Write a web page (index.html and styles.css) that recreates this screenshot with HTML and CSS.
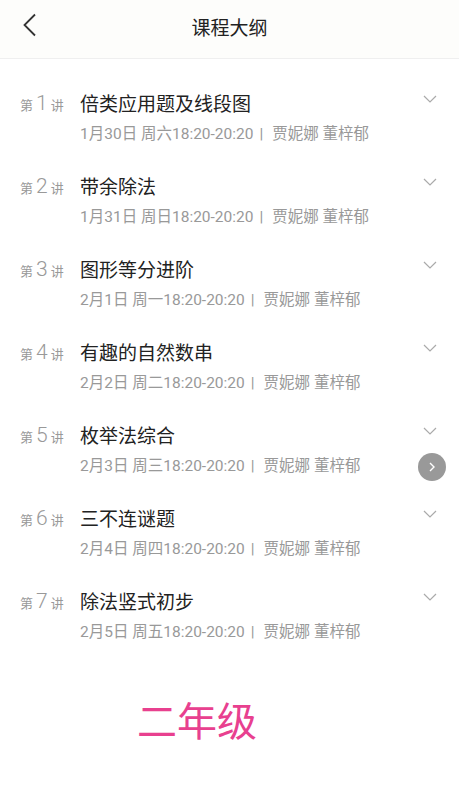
FILE: index.html
```html
<!DOCTYPE html>
<html lang="zh">
<head>
  <meta charset="UTF-8">
  <meta name="viewport" content="width=device-width, initial-scale=1.0">
  <title>课程大纲</title>
  <link rel="stylesheet" href="styles.css">
</head>
<body>
  <header class="topbar">
    <svg class="back" width="16" height="24" viewBox="0 0 16 24"><path d="M14 1.5 L3.5 12 L14 22.5" fill="none" stroke="#333" stroke-width="1.8"/></svg>
    <h1>课程大纲</h1>
  </header>

  <main class="list">
    <div class="row">
      <div class="num"><small>第</small><b>1</b><small>讲</small></div>
      <div class="info">
        <div class="title">倍类应用题及线段图</div>
        <div class="sub">1月30日 周六18:20-20:20<span class="sep">|</span>贾妮娜 董梓郁</div>
      </div>
      <svg class="arrow" width="14" height="8" viewBox="0 0 14 8"><path d="M1 1 L7 7 L13 1" fill="none" stroke="#aaa" stroke-width="1.2"/></svg>
    </div>
    <div class="row">
      <div class="num"><small>第</small><b>2</b><small>讲</small></div>
      <div class="info">
        <div class="title">带余除法</div>
        <div class="sub">1月31日 周日18:20-20:20<span class="sep">|</span>贾妮娜 董梓郁</div>
      </div>
      <svg class="arrow" width="14" height="8" viewBox="0 0 14 8"><path d="M1 1 L7 7 L13 1" fill="none" stroke="#aaa" stroke-width="1.2"/></svg>
    </div>
    <div class="row">
      <div class="num"><small>第</small><b>3</b><small>讲</small></div>
      <div class="info">
        <div class="title">图形等分进阶</div>
        <div class="sub">2月1日 周一18:20-20:20<span class="sep">|</span>贾妮娜 董梓郁</div>
      </div>
      <svg class="arrow" width="14" height="8" viewBox="0 0 14 8"><path d="M1 1 L7 7 L13 1" fill="none" stroke="#aaa" stroke-width="1.2"/></svg>
    </div>
    <div class="row">
      <div class="num"><small>第</small><b>4</b><small>讲</small></div>
      <div class="info">
        <div class="title">有趣的自然数串</div>
        <div class="sub">2月2日 周二18:20-20:20<span class="sep">|</span>贾妮娜 董梓郁</div>
      </div>
      <svg class="arrow" width="14" height="8" viewBox="0 0 14 8"><path d="M1 1 L7 7 L13 1" fill="none" stroke="#aaa" stroke-width="1.2"/></svg>
    </div>
    <div class="row">
      <div class="num"><small>第</small><b>5</b><small>讲</small></div>
      <div class="info">
        <div class="title">枚举法综合</div>
        <div class="sub">2月3日 周三18:20-20:20<span class="sep">|</span>贾妮娜 董梓郁</div>
      </div>
      <svg class="arrow" width="14" height="8" viewBox="0 0 14 8"><path d="M1 1 L7 7 L13 1" fill="none" stroke="#aaa" stroke-width="1.2"/></svg>
    </div>
    <div class="row">
      <div class="num"><small>第</small><b>6</b><small>讲</small></div>
      <div class="info">
        <div class="title">三不连谜题</div>
        <div class="sub">2月4日 周四18:20-20:20<span class="sep">|</span>贾妮娜 董梓郁</div>
      </div>
      <svg class="arrow" width="14" height="8" viewBox="0 0 14 8"><path d="M1 1 L7 7 L13 1" fill="none" stroke="#aaa" stroke-width="1.2"/></svg>
    </div>
    <div class="row">
      <div class="num"><small>第</small><b>7</b><small>讲</small></div>
      <div class="info">
        <div class="title">除法竖式初步</div>
        <div class="sub">2月5日 周五18:20-20:20<span class="sep">|</span>贾妮娜 董梓郁</div>
      </div>
      <svg class="arrow" width="14" height="8" viewBox="0 0 14 8"><path d="M1 1 L7 7 L13 1" fill="none" stroke="#aaa" stroke-width="1.2"/></svg>
    </div>

    <div class="grade">二年级</div>
  </main>

  <div class="float-btn">
    <svg width="10" height="12" viewBox="0 0 10 12"><path d="M3 2 L7 6 L3 10" fill="none" stroke="#fff" stroke-width="1.4"/></svg>
  </div>
</body>
</html>
```

FILE: styles.css
```css
body {
  margin: 0;
  background: #fff;
  font-family: "Noto Sans CJK SC", "Noto Sans", sans-serif;
  color: #333;
  width: 459px;
  height: 800px;
  position: relative;
  overflow: hidden;
}

.topbar {
  height: 52px;
  padding-bottom: 6px;
  background: #fdfdfb;
  border-bottom: 1px solid #efefef;
  display: flex;
  align-items: center;
  justify-content: center;
  position: relative;
}

.topbar h1 {
  margin: 0;
  font-size: 19px;
  font-weight: 400;
  color: #222;
}

.back {
  position: absolute;
  left: 21px;
  top: 13px;
}

.list {
  padding-top: 31px;
}

.row {
  display: flex;
  padding: 0 0 28px 20px;
  position: relative;
}

.num {
  width: 60px;
  height: 26px;
  display: flex;
  align-items: baseline;
  color: #999;
  line-height: 26px;
}

.num small {
  font-size: 13px;
}

.num b {
  font-family: Roboto, "Noto Sans", sans-serif;
  font-weight: 300;
  font-size: 21px;
  margin: 0 3px;
}

.info {
  flex: 1;
}

.title {
  font-size: 19px;
  line-height: 26px;
  color: #222;
}

.sub {
  margin-top: 7px;
  font-size: 15.5px;
  line-height: 22px;
  color: #999;
  font-family: Roboto, "Noto Sans CJK SC", sans-serif;
}

.sep {
  margin: 0 9px 0 6px;
}

.arrow {
  position: absolute;
  right: 22px;
  top: 5px;
}

.grade {
  margin-top: 26px;
  padding-left: 137px;
  font-size: 40px;
  line-height: 44px;
  color: #e8408f;
}

.float-btn {
  position: absolute;
  right: 13px;
  top: 453px;
  width: 28px;
  height: 28px;
  border-radius: 50%;
  background: #999;
  display: flex;
  align-items: center;
  justify-content: center;
}
```
